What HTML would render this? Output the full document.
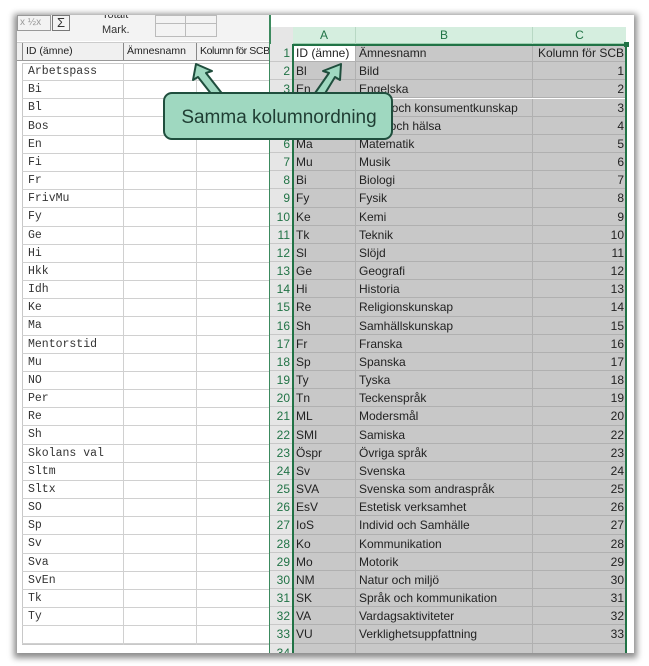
<!DOCTYPE html>
<html><head><meta charset="utf-8"><style>
*{margin:0;padding:0;box-sizing:border-box}
body{width:649px;height:666px;background:#fff;position:relative;overflow:hidden;font-family:"Liberation Sans",sans-serif}
.frame{position:absolute;left:17px;top:15px;width:617px;height:638px;background:#fff;box-shadow:0 2px 6px 3px rgba(0,0,0,.45);overflow:hidden}
.abs{position:absolute}
.lrow{position:absolute;left:5px;width:247px;height:18.17px;border-bottom:1px solid #d0d0d0;font-family:"Liberation Mono",monospace;font-size:11.5px;color:#333;line-height:18px}
.lrow span{position:absolute;left:6px}
.rrow{position:absolute;left:253px;width:357px;height:18.17px;font-size:12px;color:#222;line-height:18px}
.rn{position:absolute;left:0;width:23px;height:100%;background:#e6e6e6;color:#217346;text-align:right;padding-right:3px;border-bottom:1px solid #c8c8c8}
.ca{position:absolute;left:23px;width:63px;height:100%;background:#c8c8c8;border-bottom:1px solid #b0b0b0;border-right:1px solid #b0b0b0;padding-left:3px}
.cb{position:absolute;left:86px;width:177px;height:100%;background:#c8c8c8;border-bottom:1px solid #b0b0b0;border-right:1px solid #b0b0b0;padding-left:3px}
.cc{position:absolute;left:263px;width:94px;height:100%;background:#c8c8c8;border-bottom:1px solid #b0b0b0;text-align:right;padding-right:3px}
</style></head><body>
<div class="frame">
 <div class="abs" style="left:0;top:0;width:252px;height:26px;background:#f3f3f3;font-size:11px;color:#333">
  <div class="abs" style="left:0;top:0;width:34px;height:16px;border:1px solid #999;color:#999;font-size:10px;line-height:14px;padding-left:2px">x ½x</div>
  <div class="abs" style="left:35px;top:0;width:18px;height:16px;border:1px solid #777;font-size:13px;line-height:14px;text-align:center">Σ</div>
  <div class="abs" style="left:85px;top:-6px">Totalt</div>
  <div class="abs" style="left:85px;top:9px">Mark.</div>
  <div class="abs" style="left:138px;top:0;width:62px;height:22px;border:1px solid #bbb"></div>
  <div class="abs" style="left:168px;top:0;width:1px;height:22px;background:#bbb"></div>
  <div class="abs" style="left:138px;top:8px;width:62px;height:1px;background:#bbb"></div>
 </div>
 <div class="abs" style="left:0;top:27px;width:252px;height:19px;background:#f0f0f0;border-top:1px solid #ccc;border-bottom:1px solid #999;font-size:10.5px;color:#222;line-height:17px">
  <div class="abs" style="left:5px;top:0;height:17px;border-left:1px solid #888;padding-left:3px">ID (ämne)</div>
  <div class="abs" style="left:106px;top:0;height:17px;border-left:1px solid #888;padding-left:3px">Ämnesnamn</div>
  <div class="abs" style="left:179px;top:0;height:17px;border-left:1px solid #888;padding-left:3px;width:74px;white-space:nowrap;overflow:hidden;letter-spacing:-0.4px">Kolumn för SCB</div>
 </div>
 <div class="abs" style="left:5px;top:48px;width:247px;height:582px;border:1px solid #c8c8c8;border-right:none"></div>
 <div class="abs" style="left:106px;top:48px;width:1px;height:582px;background:#d0d0d0"></div>
 <div class="abs" style="left:179px;top:48px;width:1px;height:582px;background:#d0d0d0"></div>
 <div id="left"></div>
 <div class="abs" style="left:252px;top:0;width:2px;height:638px;background:#3c8a5e"></div>
 <div class="abs" style="left:254px;top:12px;width:355px;height:17px;background:#d5eedf;border-bottom:1px solid #9fcfb1;font-size:12px;color:#217346;line-height:17px">
  <div class="abs" style="left:0;width:22px;height:17px;background:#e6e6e6"></div>
  <div class="abs" style="left:22px;width:63px;text-align:center;border-right:1px solid #b8d8c4">A</div>
  <div class="abs" style="left:85px;width:177px;text-align:center;border-right:1px solid #b8d8c4">B</div>
  <div class="abs" style="left:262px;width:93px;text-align:center">C</div>
 </div>
 <div id="right"></div>
 <div class="abs" style="left:275px;top:29px;width:335px;height:609px;border:2px solid #217346;border-bottom:none;pointer-events:none"></div>
 <div class="abs" style="left:607px;top:27px;width:5px;height:5px;background:#217346"></div>
</div>
<svg class="abs" style="left:0;top:0" width="649" height="666">
 <g fill="#9fd8c0" stroke="#1f4e3d" stroke-width="2" stroke-linejoin="round">
  <polygon points="196,64 212,71 206,73 224,96 216,100 198,77 193,80"/>
  <polygon points="341,64 340,80 335,77 321,100 313,96 329,73 323,71"/>
  <rect x="164" y="93" width="228" height="46" rx="8"/>
 </g>
 <text x="279" y="123" text-anchor="middle" font-family="Liberation Sans, sans-serif" font-size="19" fill="#1f3d33">Samma kolumnordning</text>
</svg>
<script>
var L=["Arbetspass","Bi","Bl","Bos","En","Fi","Fr","FrivMu","Fy","Ge","Hi","Hkk","Idh","Ke","Ma","Mentorstid","Mu","NO","Per","Re","Sh","Skolans val","Sltm","Sltx","SO","Sp","Sv","Sva","SvEn","Tk","Ty",""];
var h="";L.forEach(function(t,i){h+='<div class="lrow" style="top:'+(48+i*18.17)+'px"><span>'+t+'</span></div>';});
document.getElementById("left").innerHTML=h;
var R=[["ID (ämne)","Ämnesnamn","Kolumn för SCB"],["Bl","Bild",1],["En","Engelska",2],["Hkk","Hem- och konsumentkunskap",3],["Idh","Idrott och hälsa",4],["Ma","Matematik",5],["Mu","Musik",6],["Bi","Biologi",7],["Fy","Fysik",8],["Ke","Kemi",9],["Tk","Teknik",10],["Sl","Slöjd",11],["Ge","Geografi",12],["Hi","Historia",13],["Re","Religionskunskap",14],["Sh","Samhällskunskap",15],["Fr","Franska",16],["Sp","Spanska",17],["Ty","Tyska",18],["Tn","Teckenspråk",19],["ML","Modersmål",20],["SMI","Samiska",22],["Öspr","Övriga språk",23],["Sv","Svenska",24],["SVA","Svenska som andraspråk",25],["EsV","Estetisk verksamhet",26],["IoS","Individ och Samhälle",27],["Ko","Kommunikation",28],["Mo","Motorik",29],["NM","Natur och miljö",30],["SK","Språk och kommunikation",31],["VA","Vardagsaktiviteter",32],["VU","Verklighetsuppfattning",33],["","",""]];
h="";R.forEach(function(r,i){h+='<div class="rrow" style="top:'+(29+i*18.17)+'px"><div class="rn">'+(i+1)+'</div><div class="ca"'+(i==0?' style="background:#fff"':'')+'>'+r[0]+'</div><div class="cb">'+r[1]+'</div><div class="cc">'+r[2]+'</div></div>';});
document.getElementById("right").innerHTML=h;
</script>
</body></html>
